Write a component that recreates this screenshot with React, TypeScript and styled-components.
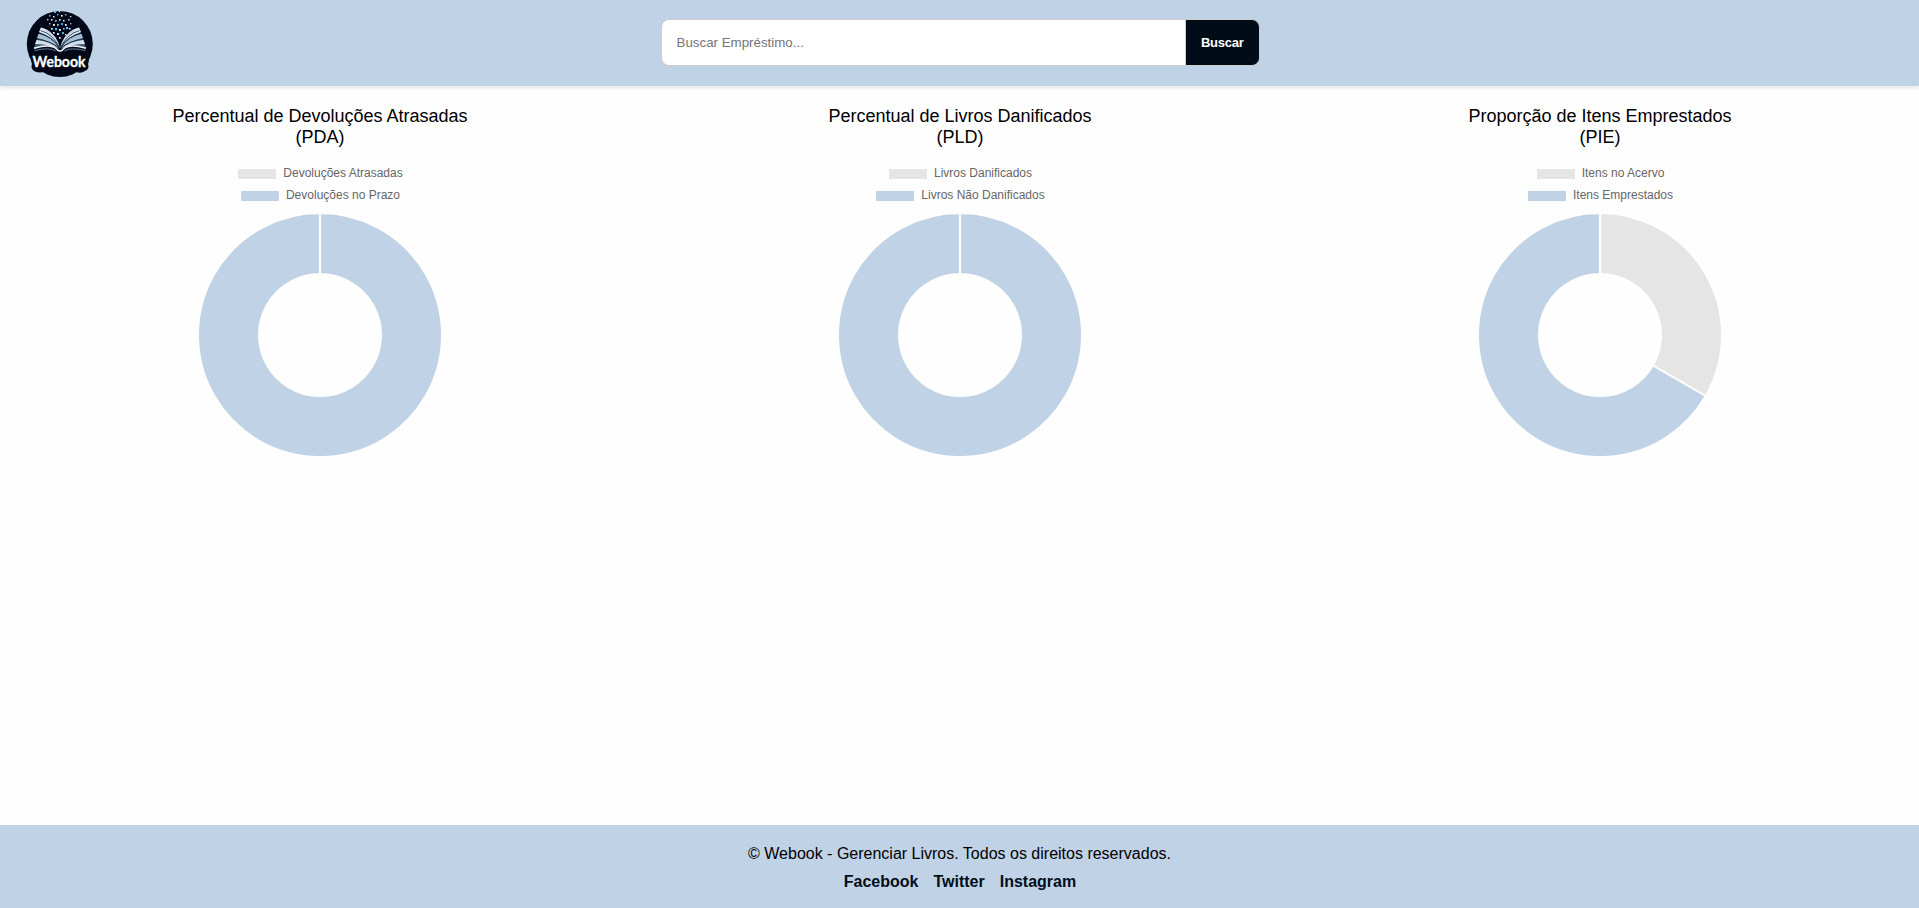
import React from 'react';
import styled, { createGlobalStyle } from 'styled-components';

const BLUE = '#c0d2e6';
const GREY = '#e5e5e5';
const NAVY = '#000d19';

const GlobalStyle = createGlobalStyle`
  * { box-sizing: border-box; margin: 0; padding: 0; }
  body { background: #fefefe; font-family: "Liberation Sans", Arial, sans-serif; color: #000; }
`;

const Page = styled.div`
  display: flex;
  flex-direction: column;
  height: 100vh;
  overflow: hidden;
`;

const Header = styled.header`
  display: grid;
  grid-template-columns: 1fr 600px 1fr;
  align-items: center;
  height: 86px;
  flex: none;
  padding: 0 20px;
  background: ${BLUE};
  box-shadow: 0 2px 4px rgba(0, 0, 0, 0.1);
`;

const Logo = styled.svg`
  display: block;
  width: 80px;
  height: 80px;
`;

const SearchForm = styled.form`
  display: flex;
  width: 599px;
  height: 47px;
  margin-top: -1px;
  justify-self: end;
`;

const SearchInput = styled.input`
  flex: 1;
  min-width: 0;
  padding: 0 15px;
  border: 1px solid #ccc;
  border-radius: 8px 0 0 8px;
  background: #fff;
  font: 13.333px "Liberation Sans", Arial, sans-serif;
  outline: none;
  &::placeholder { color: #757575; }
`;

const SearchButton = styled.button`
  width: 73.5px;
  border: 1px solid #ccc;
  border-left: 0;
  border-radius: 0 8px 8px 0;
  background: ${NAVY};
  color: #fff;
  font: bold 13px "Liberation Sans", Arial, sans-serif;
  letter-spacing: -0.25px;
`;

const Main = styled.main`
  flex: 1;
  display: grid;
  grid-template-columns: repeat(3, 640px);
  justify-items: center;
  align-items: start;
  padding-top: 20px;
`;

const Card = styled.section`
  display: flex;
  flex-direction: column;
  align-items: center;
  width: 300px;
`;

const Title = styled.h2`
  font-size: 18px;
  line-height: 21px;
  font-weight: 400;
  text-align: center;
`;

const Legend = styled.ul`
  display: flex;
  flex-direction: column;
  align-items: center;
  gap: 8px;
  margin-top: 18px;
  padding-left: 1px;
  list-style: none;
`;

const LegendItem = styled.li<{ $color: string }>`
  display: flex;
  align-items: center;
  gap: 7px;
  font-size: 12px;
  line-height: 14px;
  color: #666;
  &::before {
    content: "";
    width: 38px;
    height: 10px;
    margin-top: 2px;
    background: ${(p) => p.$color};
  }
`;

const Donut = styled.svg`
  display: block;
  width: 244px;
  height: 244px;
  margin-top: 11px;
`;

const Footer = styled.footer`
  display: flex;
  flex-direction: column;
  align-items: center;
  gap: 10px;
  height: 83px;
  flex: none;
  padding-top: 20px;
  background: ${BLUE};
  font-size: 16px;
  line-height: 18px;
`;

const Links = styled.nav`
  display: flex;
  gap: 15px;
  padding-left: 1px;
`;

const FooterLink = styled.a`
  color: ${NAVY};
  font-weight: 700;
  text-decoration: none;
`;

const LogoText = styled.text`
  font: 700 16px Lato, "Open Sans", sans-serif;
  fill: #fff;
  stroke: #fff;
  stroke-width: 0.3px;
`;

const point = (r: number, turn: number) => {
  const a = turn * 2 * Math.PI;
  return `${122 + r * Math.sin(a)} ${122 - r * Math.cos(a)}`;
};

const slice = (from: number, to: number) => {
  const big = to - from > 0.5 ? 1 : 0;
  return `M${point(122, from)}A122 122 0 ${big} 1 ${point(122, to)}L${point(61, to)}A61 61 0 ${big} 0 ${point(61, from)}Z`;
};

type ChartData = { title: string; code: string; first: string; second: string; share: number };

const charts: ChartData[] = [
  { title: 'Percentual de Devoluções Atrasadas', code: '(PDA)', first: 'Devoluções Atrasadas', second: 'Devoluções no Prazo', share: 0 },
  { title: 'Percentual de Livros Danificados', code: '(PLD)', first: 'Livros Danificados', second: 'Livros Não Danificados', share: 0 },
  { title: 'Proporção de Itens Emprestados', code: '(PIE)', first: 'Itens no Acervo', second: 'Itens Emprestados', share: 1 / 3 },
];

const ChartCard = ({ title, code, first, second, share }: ChartData) => (
  <Card>
    <Title>{title}<br />{code}</Title>
    <Legend>
      <LegendItem $color={GREY}>{first}</LegendItem>
      <LegendItem $color={BLUE}>{second}</LegendItem>
    </Legend>
    <Donut viewBox="0 0 244 244" stroke="#fff" strokeWidth="2">
      {share > 0 && <path d={slice(0, share)} fill={GREY} />}
      <path d={slice(share, 0.99999)} fill={BLUE} />
    </Donut>
  </Card>
);

/* Dots rising from the open book: x, y, size, colour */
const sparks: [number, number, number, string][] = [
  [34, 8, 2, '#4db5e8'], [39, 8, 1.2, '#dff3ff'], [29, 12, 1.6, '#6f9fc4'], [33, 13, 1.5, '#d7e9f5'],
  [37, 11, 1.4, '#58bdf0'], [41, 12, 1.6, '#fff'], [45, 11, 1.4, '#9cc7e2'], [50, 13, 1.3, '#dbe8f1'],
  [27, 16, 1.4, '#bcd3e4'], [31, 16, 1.5, '#fff'], [35, 17, 1.8, '#5ea9d3'], [39, 16, 1.6, '#d8efff'],
  [43, 17, 1.5, '#e9f6ff'], [48, 16, 1.6, '#aec9dc'], [29, 20, 1.4, '#9fc8e5'], [33, 21, 1.8, '#fff'],
  [37, 21, 1.8, '#7ecbf2'], [41, 20, 2, '#35a9e5'], [45, 21, 1.7, '#fff'], [50, 20, 1.4, '#8ea9bd'],
  [31, 25, 1.8, '#c5e4f7'], [35, 25, 2.2, '#45b6ee'], [39, 26, 1.8, '#fff'], [43, 25, 1.6, '#6fc8f4'],
  [46, 24, 2.2, '#55b9ec'], [49, 25, 1.5, '#eef8ff'], [33, 29, 1.6, '#fff'], [37, 30, 2, '#a4dcfa'],
  [42, 29, 2, '#49b4e9'], [45, 31, 1.4, '#dff3ff'], [39, 34, 1.7, '#dbf2ff'],
];

/* One half of the open book; the other half is its mirror image */
const BookSide = () => (
  <>
    <path d="M21 24.5Q30 26 39.5 46Q30 40 14 45.5L17 36Z" fill="#3f5d7b" />
    <path d="M21 24.5Q34 28 39.5 45Q33 34 19 29Z" fill="#e3ecf4" />
    <path d="M18.5 31Q32 34 39 45Q30 38 17 35Z" fill="#a9bfd3" />
    <path d="M16.5 37Q30 38 39 46Q28 41 15 41Z" fill="#d3e0ec" />
    <path d="M26 26Q37 32 40 45Q35 35 25 28Z" fill="#c6d8e8" />
    <path d="M20.500 27.500Q33 31 39 44M19 30Q32 33 39 44M17 36Q31 38 39 45" fill="none" stroke="#12263d" strokeWidth="0.8" />
    <path d="M14 45.2Q31 40.5 36.5 46Q38 48 40 48" fill="none" stroke="#f4f8fc" strokeWidth="1.5" />
    <path d="M14.5 47.5Q30 44 35.5 48" fill="none" stroke="#6b8aa8" strokeWidth="0.9" />
  </>
);

const WebookLogo = () => (
  <Logo viewBox="0 0 80 80" role="img" aria-label="Webook">
    <circle cx="39.8" cy="41" r="33" fill="#020817" />
    <path d="M13 52Q10 57 12 61Q10 66 15 68.5Q19 70 24 69H56Q61 71 65 68Q70 66 68 61Q70 57 67 52Z" fill="#020817" />
    <BookSide />
    <g transform="translate(80 0) scale(-1 1)"><BookSide /></g>
    {sparks.map(([x, y, size, color], i) => (
      <rect key={i} x={x} y={y} width={size} height={size} fill={color} />
    ))}
    <LogoText x="12.5" y="64.2" textLength="53" lengthAdjust="spacingAndGlyphs">Webook</LogoText>
  </Logo>
);

export default function App() {
  return (
    <Page>
      <GlobalStyle />
      <Header>
        <WebookLogo />
        <SearchForm onSubmit={(e) => e.preventDefault()}>
          <SearchInput placeholder="Buscar Empréstimo..." />
          <SearchButton>Buscar</SearchButton>
        </SearchForm>
      </Header>
      <Main>
        {charts.map((c) => <ChartCard key={c.code} {...c} />)}
      </Main>
      <Footer>
        <p>© Webook - Gerenciar Livros. Todos os direitos reservados.</p>
        <Links>
          <FooterLink>Facebook</FooterLink>
          <FooterLink>Twitter</FooterLink>
          <FooterLink>Instagram</FooterLink>
        </Links>
      </Footer>
    </Page>
  );
}
